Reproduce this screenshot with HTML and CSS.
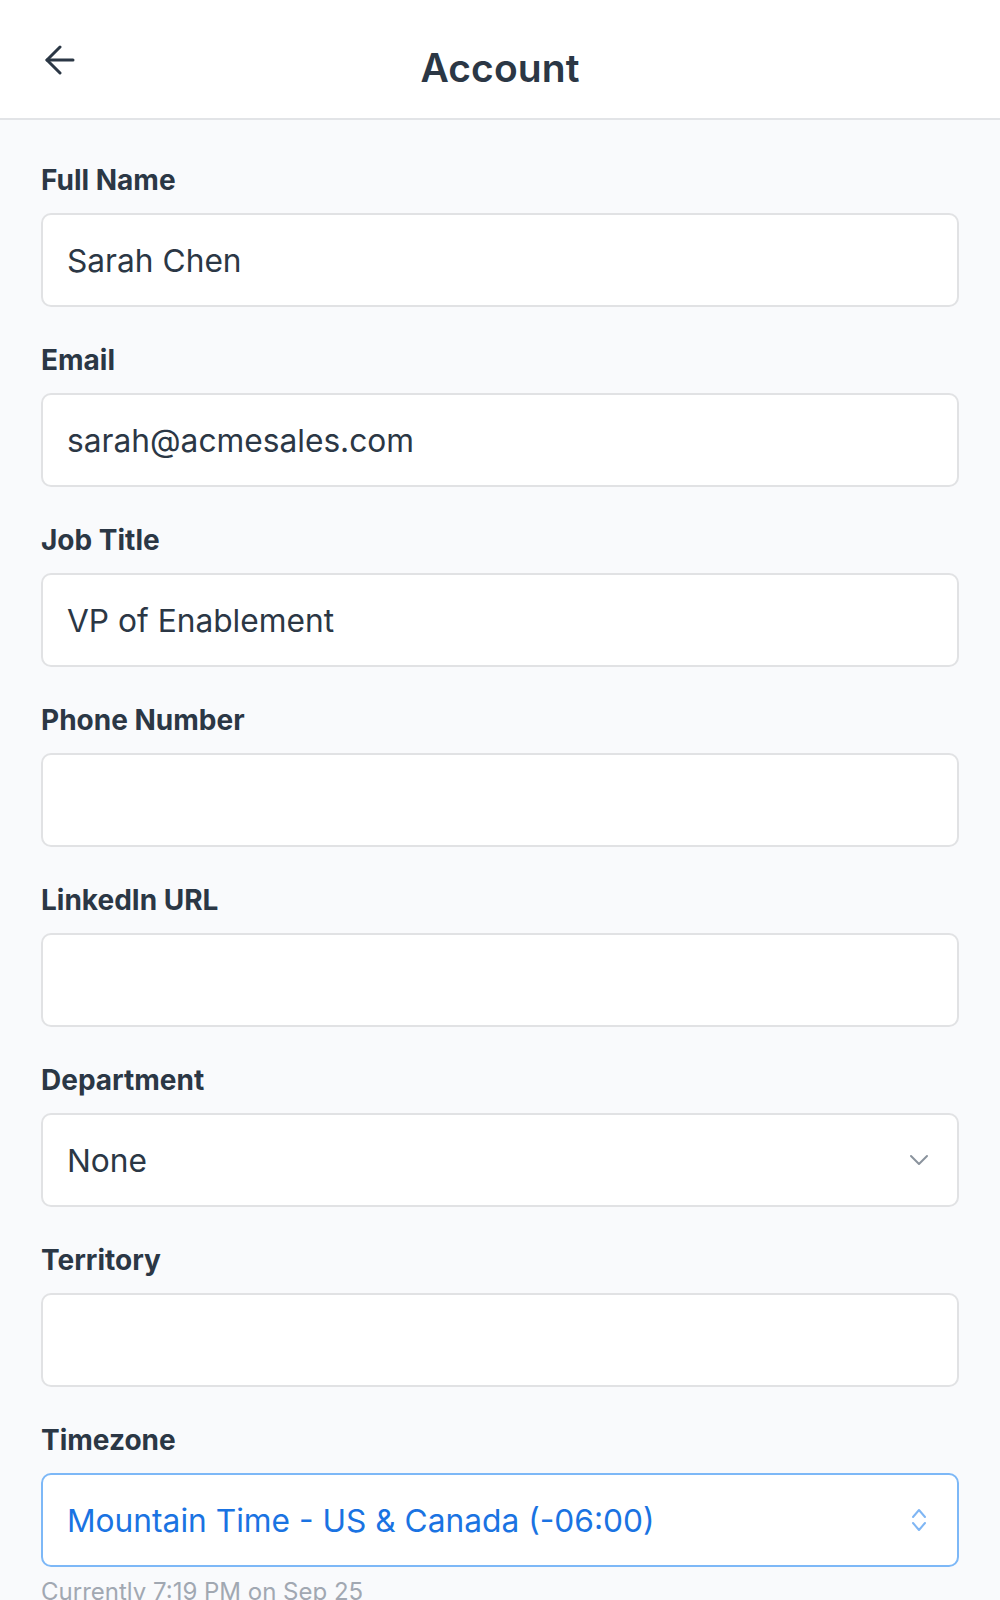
FILE: index.html
```html
<!DOCTYPE html>
<html lang="en">
<head>
<meta charset="utf-8">
<title>Account</title>
<link rel="stylesheet" href="styles.css">
</head>
<body>
<header class="topbar">
  <button class="back" aria-label="Back">
    <svg width="30" height="30" viewBox="0 0 30 30" fill="none" stroke="currentColor" stroke-width="3" stroke-linecap="round" stroke-linejoin="round"><path d="M28 15H2"/><path d="M15 28 2 15 15 2"/></svg>
  </button>
  <h1 class="title">Account</h1>
</header>
<main class="form">
  <div class="field">
    <label class="label">Full Name</label>
    <div class="box">Sarah Chen</div>
  </div>
  <div class="field">
    <label class="label">Email</label>
    <div class="box">sarah@acmesales.com</div>
  </div>
  <div class="field">
    <label class="label">Job Title</label>
    <div class="box">VP of Enablement</div>
  </div>
  <div class="field">
    <label class="label">Phone Number</label>
    <div class="box"></div>
  </div>
  <div class="field">
    <label class="label">LinkedIn URL</label>
    <div class="box"></div>
  </div>
  <div class="field">
    <label class="label">Department</label>
    <div class="box select">
      <span>None</span>
      <svg class="chev" width="20" height="12" viewBox="0 0 20 12" fill="none" stroke="currentColor" stroke-width="2" stroke-linecap="round" stroke-linejoin="round"><path d="M2 2l8 8 8-8"/></svg>
    </div>
  </div>
  <div class="field">
    <label class="label">Territory</label>
    <div class="box"></div>
  </div>
  <div class="field">
    <label class="label">Timezone</label>
    <div class="box select focus">
      <span>Mountain Time - US &amp; Canada (-06:00)</span>
      <svg class="updown" width="16" height="24" viewBox="0 0 16 24" fill="none" stroke="currentColor" stroke-width="2" stroke-linecap="round" stroke-linejoin="round"><path d="M2 9l6-7 6 7"/><path d="M2 15l6 7 6-7"/></svg>
    </div>
    <p class="help">Currently 7:19 PM on Sep 25</p>
  </div>
</main>
</body>
</html>
```
FILE: styles.css
```css
* { box-sizing: border-box; }
html, body { margin: 0; padding: 0; }
body {
  font-family: Inter, "Noto Sans", "Liberation Sans", sans-serif;
  background: #f9fafc;
  color: #2b3745;
}
.topbar {
  height: 120px;
  background: #ffffff;
  border-bottom: 2px solid #e2e4e7;
  display: flex;
  align-items: center;
  justify-content: center;
  position: relative;
}
.back {
  position: absolute;
  left: 45px;
  top: 45px;
  padding: 0;
  border: 0;
  background: none;
  color: #2b3745;
  display: flex;
}
.title {
  margin: 0;
  font-size: 39px;
  font-weight: 600;
  line-height: 48px;
  color: #2b3745;
  letter-spacing: 0.1px;
  padding-top: 18px;
}
.form {
  padding: 43px 41px 0;
  display: flex;
  flex-direction: column;
  gap: 36px;
}
.field {
  display: flex;
  flex-direction: column;
}
.label {
  font-size: 28px;
  line-height: 34px;
  font-weight: 700;
  margin-bottom: 16px;
  color: #2b3745;
}
.box {
  height: 94px;
  background: #ffffff;
  border: 2px solid #e1e2e4;
  border-radius: 10px;
  padding: 0 28px 0 24px;
  display: flex;
  align-items: center;
  font-size: 31.7px;
  color: #2b3745;
}
.select {
  justify-content: space-between;
}
.chev { color: #8a939d; }
.focus {
  border-color: #7db8f7;
  color: #1a73e2;
}
.updown { color: #7fb6f4; margin-right: 2px; }
.help {
  margin: 9px 0 0;
  font-size: 24px;
  line-height: 32px;
  color: #a1a8b2;
}
```
